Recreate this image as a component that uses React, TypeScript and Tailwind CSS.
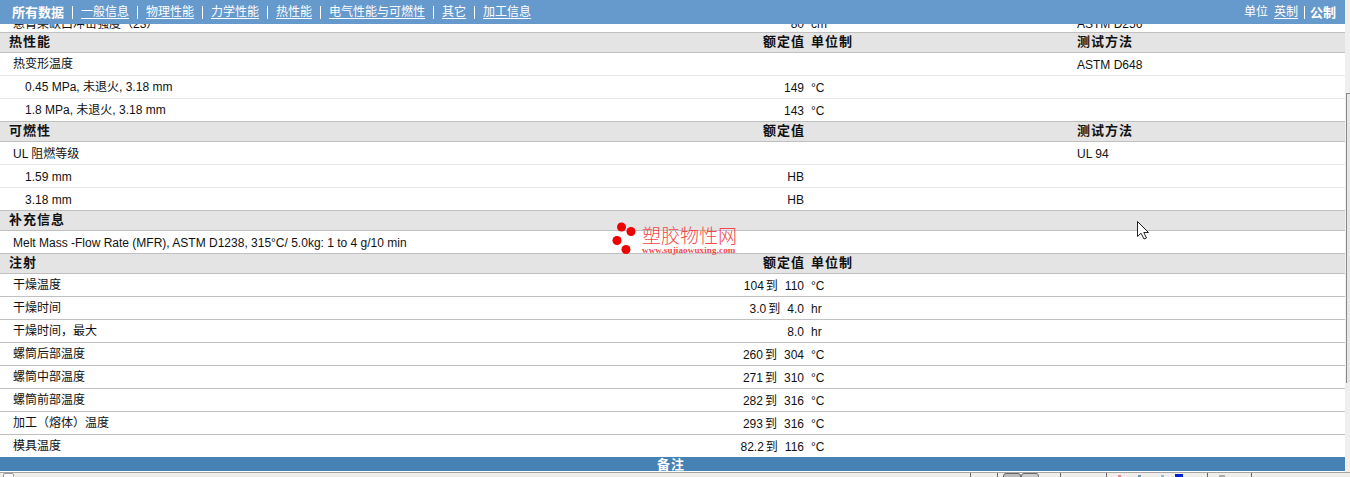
const FONT = "font-['Liberation_Sans','Noto_Sans_CJK_SC',sans-serif]";

const navLinks = ['一般信息', '物理性能', '力学性能', '热性能', '电气性能与可燃性', '其它', '加工信息'];

type Row = {
  name: string;
  indent?: boolean;
  low?: string;
  high?: string;
  unit?: string;
  method?: string;
  nudge?: boolean;
};

function Separator() {
  return <span className="mx-[8px] h-[13px] w-px bg-white" />;
}

function TopBar() {
  return (
    <header className="flex h-[24px] shrink-0 items-center justify-between bg-[#6699cc] pl-[12px] pr-[9px] text-white">
      <nav className="flex items-center text-[12px] leading-none">
        <span className="text-[13px] font-bold">所有数据</span>
        {navLinks.map((link) => (
          <span key={link} className="flex items-center">
            <Separator />
            <a className="underline underline-offset-2">{link}</a>
          </span>
        ))}
      </nav>
      <div className="flex items-center text-[12px] leading-none">
        <span className="mr-[6px]">单位</span>
        <a className="underline underline-offset-2">英制</a>
        <span className="ml-[6px] mr-[5px] h-[13px] w-px bg-white" />
        <span className="text-[13px] font-bold">公制</span>
      </div>
    </header>
  );
}

function SectionHeader({ title, value, unit, method }: { title: string; value?: boolean; unit?: boolean; method?: boolean }) {
  return (
    <div className="grid h-[20px] grid-cols-[600px_205px_272px_1fr] items-center border-b border-[#c0c0c0] bg-[#e4e4e4] pb-[2px] text-[13px] font-bold leading-none tracking-[1px] text-[#111]">
      <div className="pl-[9px]">{title}</div>
      <div className="text-right">{value && '额定值'}</div>
      <div className="pl-[6px]">{unit && '单位制'}</div>
      <div>{method && '测试方法'}</div>
    </div>
  );
}

function DataRow({ row, border }: { row: Row; border: string }) {
  return (
    <div className={`grid h-[23px] grid-cols-[600px_205px_272px_1fr] items-center border-b bg-white text-[12px] leading-none text-[#111] ${border}`}>
      <div className={`whitespace-nowrap ${row.indent ? 'pl-[25px]' : 'pl-[13px]'} ${row.nudge ? 'pt-[2px]' : ''}`}>{row.name}</div>
      <div className="flex justify-end pr-px pt-[2px]">
        {row.low && <span>{row.low}</span>}
        {row.low && <span className="ml-[2px] mr-[7px]">到</span>}
        {row.high && <span>{row.high}</span>}
      </div>
      <div className="pl-[6px] pt-[2px]">{row.unit}</div>
      <div className="pt-[2px]">{row.method}</div>
    </div>
  );
}

const LIGHT = 'border-[#e8e8e8]';
const DARK = 'border-[#c0c0c0]';

function Logo() {
  return (
    <div className="absolute left-[612px] top-[221px] flex">
      <svg width="30" height="34" viewBox="0 0 30 34" className="shrink-0">
        <g fill="#f00000">
          <circle cx="9.5" cy="6" r="4.5" />
          <circle cx="19" cy="10.5" r="4.5" />
          <circle cx="5" cy="19.5" r="4.5" />
          <circle cx="14" cy="28.5" r="4.5" />
        </g>
      </svg>
      <div className="flex flex-col text-[#f4474b]">
        <span className="mt-[6px] h-[19px] text-[19px] font-light leading-[20px]">塑胶物性网</span>
        <span className="font-['Liberation_Serif',serif] text-[9px] font-bold leading-[9px] tracking-[0.15px]">www.sujiaowuxing.com</span>
      </div>
    </div>
  );
}

function Cursor() {
  return (
    <svg width="14" height="20" viewBox="0 0 14 20" className="absolute left-[1136px] top-[220px]">
      <path d="M1.5 1.5 L1.5 16.5 L5 13.2 L8 19 L10.5 18 L7.8 12.5 L12.5 12.5 Z" fill="#fff" stroke="#222" strokeWidth="1" />
    </svg>
  );
}

function ScrollTrack() {
  return (
    <div className="relative w-[5px] shrink-0 bg-[#efefef]">
      <div className="absolute left-[1px] top-[93px] h-[290px] w-[4px] border-l border-t border-[#8a8a8a] bg-[#e6e6e6]" />
    </div>
  );
}

function StatusBar() {
  return (
    <footer className="relative h-[5px] shrink-0 overflow-hidden border-t border-[#a8a4a4] bg-[#f1efec]">
      <div className="absolute left-[3px] top-[0px] h-[8px] w-[11px] rounded-[2px] border border-[#999] bg-white" />
      <div className="absolute left-[970px] top-0 h-[4px] w-px bg-[#666]" />
      <div className="absolute left-[997px] top-0 h-[4px] w-px bg-[#666]" />
      <div className="absolute left-[1003px] top-0 h-[8px] w-[18px] rounded-t-[3px] border border-[#666] bg-[#bbb]" />
      <div className="absolute left-[1021px] top-0 h-[8px] w-[18px] rounded-t-[3px] border border-[#666] bg-[#ccc]" />
      <div className="absolute left-[1060px] top-0 h-[4px] w-px bg-[#666]" />
      <div className="absolute left-[1106px] top-0 h-[4px] w-px bg-[#666]" />
      <div className="absolute left-[1118px] top-[2px] h-[2px] w-[3px] bg-[#e88]" />
      <div className="absolute left-[1138px] top-[2px] h-[2px] w-[3px] bg-[#79a]" />
      <div className="absolute left-[1161px] top-[2px] h-[2px] w-[3px] bg-[#8bd]" />
      <div className="absolute left-[1175px] top-[1px] h-[3px] w-[8px] bg-[#0022cc]" />
      <div className="absolute left-[1207px] top-0 h-[4px] w-px bg-[#666]" />
      <div className="absolute left-[1219px] top-[2px] h-[2px] w-[6px] bg-[#aaa]" />
      <div className="absolute left-[1251px] top-0 h-[4px] w-px bg-[#666]" />
    </footer>
  );
}

export default function App() {
  const heat: Row[] = [
    { name: '热变形温度', method: 'ASTM D648' },
    { name: '0.45 MPa, 未退火, 3.18 mm', indent: true, high: '149', unit: '°C' },
    { name: '1.8 MPa, 未退火, 3.18 mm', indent: true, high: '143', unit: '°C' },
  ];
  const flame: Row[] = [
    { name: 'UL 阻燃等级', method: 'UL 94', nudge: true },
    { name: '1.59 mm', indent: true, high: 'HB', nudge: true },
    { name: '3.18 mm', indent: true, high: 'HB', nudge: true },
  ];
  const injection: Row[] = [
    { name: '干燥温度', low: '104', high: '110', unit: '°C' },
    { name: '干燥时间', low: '3.0', high: '4.0', unit: 'hr' },
    { name: '干燥时间，最大', high: '8.0', unit: 'hr' },
    { name: '螺筒后部温度', low: '260', high: '304', unit: '°C' },
    { name: '螺筒中部温度', low: '271', high: '310', unit: '°C' },
    { name: '螺筒前部温度', low: '282', high: '316', unit: '°C' },
    { name: '加工（熔体）温度', low: '293', high: '316', unit: '°C' },
  ];

  return (
    <div className={`relative flex h-[477px] w-full flex-col overflow-hidden bg-white ${FONT}`}>
      <div className="flex min-h-0 flex-1">
        <main className="flex w-[1345px] shrink-0 flex-col">
          <TopBar />
          <div className="grid h-[9px] grid-cols-[600px_205px_272px_1fr] items-end overflow-hidden border-b border-[#c0c0c0] text-[12px] leading-[16px] text-[#111]">
            <div className="h-[8px] pl-[13px] whitespace-nowrap"><div className="-mt-[8px]">悬臂梁缺口冲击强度（23）</div></div>
            <div className="h-[8px] pr-px text-right"><div className="-mt-[8px]">80</div></div>
            <div className="h-[8px] pl-[6px]"><div className="-mt-[8px]">cm</div></div>
            <div className="h-[8px]"><div className="-mt-[8px]">ASTM D256</div></div>
          </div>
          <SectionHeader title="热性能" value unit method />
          {heat.map((row, i) => (
            <DataRow key={row.name} row={row} border={i === heat.length - 1 ? DARK : LIGHT} />
          ))}
          <SectionHeader title="可燃性" value method />
          {flame.map((row, i) => (
            <DataRow key={row.name} row={row} border={i === flame.length - 1 ? DARK : LIGHT} />
          ))}
          <SectionHeader title="补充信息" />
          <DataRow row={{ name: 'Melt Mass -Flow Rate (MFR), ASTM D1238, 315°C/ 5.0kg: 1 to 4 g/10 min', nudge: true }} border={DARK} />
          <SectionHeader title="注射" value unit />
          {injection.map((row) => (
            <DataRow key={row.name} row={row} border={DARK} />
          ))}
          <div className="grid h-[22px] grid-cols-[600px_205px_272px_1fr] items-center bg-white text-[12px] leading-none text-[#111]">
            <div className="pl-[13px]">模具温度</div>
            <div className="flex justify-end pr-px pt-[2px]">
              <span>82.2</span>
              <span className="ml-[2px] mr-[7px]">到</span>
              <span>116</span>
            </div>
            <div className="pl-[6px] pt-[2px]">°C</div>
          </div>
          <div className="h-[14px] shrink-0 overflow-hidden bg-[#4682b4] pr-[3px] text-center text-[13px] font-bold leading-[15px] tracking-[1px] text-white">
            备注
          </div>
          <div className="h-px bg-white" />
        </main>
        <ScrollTrack />
      </div>
      <StatusBar />
      <Logo />
      <Cursor />
    </div>
  );
}
